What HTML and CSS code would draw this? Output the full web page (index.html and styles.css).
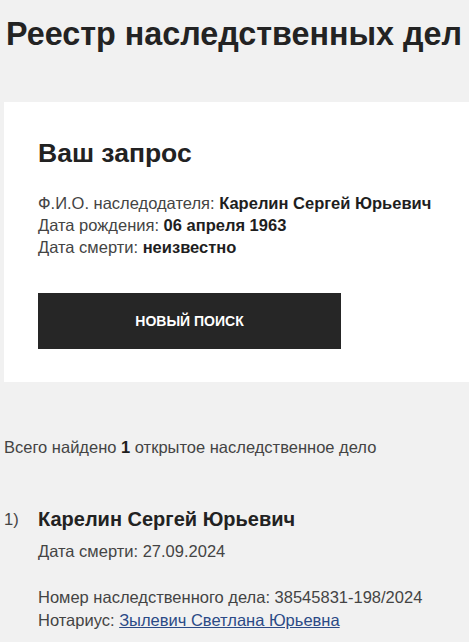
FILE: index.html
```html
<!DOCTYPE html>
<html lang="ru">
<head>
<meta charset="utf-8">
<title>Реестр наследственных дел</title>
<link rel="stylesheet" href="styles.css">
</head>
<body>
<main class="page">
  <h1 class="title">Реестр наследственных дел</h1>
  <section class="card">
    <h2 class="card-title">Ваш запрос</h2>
    <div class="query">
      <div>Ф.И.О. наследодателя: <b>Карелин Сергей Юрьевич</b></div>
      <div>Дата рождения: <b>06 апреля 1963</b></div>
      <div>Дата смерти: <b>неизвестно</b></div>
    </div>
    <button class="btn" type="button">НОВЫЙ ПОИСК</button>
  </section>
  <p class="total">Всего найдено <b>1</b> открытое наследственное дело</p>
  <ol class="results">
    <li class="result">
      <span class="num">1)</span>
      <div class="result-body">
        <div class="name">Карелин Сергей Юрьевич</div>
        <div class="death">Дата смерти: 27.09.2024</div>
        <div class="meta">
          <div>Номер наследственного дела: 38545831-198/2024</div>
          <div>Нотариус: <a href="#" class="link">Зылевич Светлана Юрьевна</a></div>
        </div>
      </div>
    </li>
  </ol>
</main>
</body>
</html>
```
FILE: styles.css
```css
html, body {
  margin: 0;
  padding: 0;
  background: #f1f1f1;
  overflow: hidden;
}
.page {
  font-family: "Liberation Sans", Arial, sans-serif;
  color: #444;
  font-size: 16.5px;
}
.title {
  margin: 0;
  padding: 14px 0 0 6px;
  font-size: 32.3px;
  line-height: 40px;
  font-weight: 700;
  color: #232323;
  white-space: nowrap;
}
.card {
  margin: 48px 0 0 4px;
  background: #fff;
  padding: 34px 0 33px 34px;
}
.card-title {
  margin: 0;
  font-size: 26.5px;
  line-height: 34px;
  font-weight: 700;
  color: #222;
}
.query {
  margin-top: 22px;
  line-height: 22px;
}
.query b {
  color: #1e1e1e;
}
.btn {
  display: flex;
  align-items: center;
  justify-content: center;
  margin-top: 35px;
  width: 303px;
  height: 56px;
  border: 0;
  background: #262626;
  color: #fff;
  font-family: "Liberation Sans", Arial, sans-serif;
  font-weight: 700;
  font-size: 14px;
  padding: 0;
}
.total {
  margin: 54px 0 0 4px;
  line-height: 22px;
}
.total b { color: #1e1e1e; }
.results {
  list-style: none;
  margin: 48px 0 0 0;
  padding: 0 0 0 4px;
}
.result {
  display: flex;
}
.num {
  width: 34px;
  font-size: 16.5px;
  line-height: 26px;
}
.name {
  font-size: 20px;
  line-height: 26px;
  font-weight: 700;
  color: #222;
}
.death {
  margin-top: 8px;
  line-height: 22px;
}
.meta {
  margin-top: 24px;
  line-height: 23px;
}
.link {
  color: #2b4a86;
  text-decoration: underline;
}
```
